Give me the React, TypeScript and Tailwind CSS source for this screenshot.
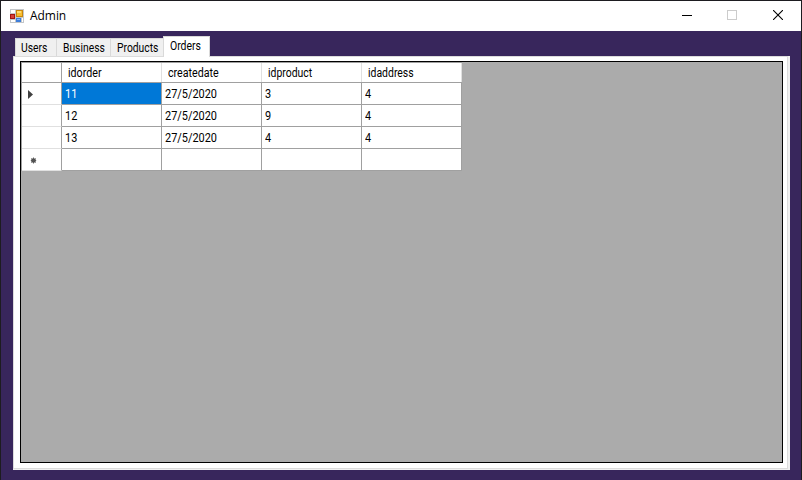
const columns = [
  { name: 'idorder', scale: 'scale-x-[0.89]' },
  { name: 'createdate', scale: 'scale-x-[0.89]' },
  { name: 'idproduct', scale: 'scale-x-[0.87]' },
  { name: 'idaddress', scale: 'scale-x-[0.87]' },
];

const rows = [
  ['11', '27/5/2020', '3', '4'],
  ['12', '27/5/2020', '9', '4'],
  ['13', '27/5/2020', '4', '4'],
  ['', '', '', ''],
];

function FormIcon() {
  return (
    <svg width="14" height="14" viewBox="0 0 14 14" shapeRendering="crispEdges">
      <path d="M0 0h14v14H0z" fill="#c3c6c9" />
      <path d="M1 1h4v3H1zM1 11h4v2H1zM12 9h1v4h-1z" fill="#fff" />
      <path d="M6 1h7v7H6z" fill="#c8860c" />
      <path d="M7 2h5v5H7z" fill="#f7bd30" />
      <path d="M7 2h4v2H7z" fill="#ffdc70" />
      <path d="M0 5h5v5H0z" fill="#a41412" />
      <path d="M1 6h3v3H1z" fill="#d6403a" />
      <path d="M6 9h5v4H6z" fill="#3d7edb" />
      <path d="M7 10h3v1H7z" fill="#8ab8f5" />
    </svg>
  );
}

function TitleBar() {
  return (
    <header className="flex h-[30px] shrink-0 items-center bg-white pl-[9px]">
      <FormIcon />
      <span className="ml-[6px] font-['Open_Sans',sans-serif] text-[12px] leading-[16px] tracking-[-0.05px]">Admin</span>
      <div className="ml-auto flex h-full">
        <div className="flex w-[46px] items-center justify-center">
          <div className="-mt-px h-px w-[10px] bg-black" />
        </div>
        <div className="mr-px flex w-[44px] items-center justify-center">
          <div className="-mt-[2px] size-[10px] border border-[#ccc]" />
        </div>
        <div className="flex w-[46px] items-center justify-center">
          <svg width="10" height="10" viewBox="0 0 10 10" stroke="#000" strokeWidth="1.1" className="-mt-[2px]">
            <path d="M0 0L10 10M10 0L0 10" />
          </svg>
        </div>
      </div>
    </header>
  );
}

function Tabs() {
  return (
    <nav className="ml-[15px] flex h-[20px] items-end text-[12px] leading-[14px]">
      <div className="h-[18px] w-[41px] border-t border-l border-[#d9d9d9] bg-[#f0f0f0] pt-[2px] pl-[5px]">
        <span className="inline-block origin-left scale-x-[0.86]">Users</span>
      </div>
      <div className="h-[18px] w-[54px] border-t border-l border-[#d9d9d9] bg-[#f0f0f0] pt-[2px] pl-[6px]">
        <span className="inline-block origin-left scale-x-[0.86]">Business</span>
      </div>
      <div className="h-[18px] w-[53px] border-t border-l border-[#d9d9d9] bg-[#f0f0f0] pt-[2px] pl-[6px]">
        <span className="inline-block origin-left scale-x-[0.86]">Products</span>
      </div>
      <div className="z-10 -mb-px h-[21px] w-[47px] border border-b-0 border-[#d9d9d9] bg-white pt-[2px] pl-[6px]">
        <span className="inline-block origin-left scale-x-[0.87]">Orders</span>
      </div>
    </nav>
  );
}

function RowMarker({ row }: { row: number }) {
  if (row === 0) {
    return (
      <svg width="5" height="9" viewBox="0 0 5 9" className="mt-px ml-[6px]">
        <path d="M0 0L5 4.5L0 9Z" fill="#404040" />
      </svg>
    );
  }
  if (row === 3) {
    return (
      <svg width="7" height="7" viewBox="0 0 7 7" className="mt-[2px] ml-[8px]">
        <circle cx="3.5" cy="3.5" r="2.2" fill="#404040" />
        <path d="M3.5 .5v6M1 1.5l5 4M6 1.5L1 5.5M.8 3.5h5.4" stroke="#555" strokeWidth="0.9" />
      </svg>
    );
  }
  return null;
}

function OrdersGrid() {
  return (
    <div className="flex w-[441px] flex-col border-t border-l border-[#a0a0a0] text-[12px] leading-[14px]">
      <div className="flex h-[20px] border-b border-[#a0a0a0] bg-white">
        <div className="w-[40px] border-r border-[#a0a0a0]" />
        {columns.map((c) => (
          <div key={c.name} className="w-[100px] border-r border-[#e0e0e0] pt-[3px] pl-[6px]">
            <span className={`inline-block origin-left ${c.scale}`}>{c.name}</span>
          </div>
        ))}
      </div>
      {rows.map((row, r) => (
        <div key={r} className="flex h-[22px]">
          <div className="flex w-[40px] items-center border-r border-b border-r-[#a0a0a0] border-b-[#e0e0e0] bg-white">
            <RowMarker row={r} />
          </div>
          {row.map((cell, c) => (
            <div
              key={c}
              className={`w-[100px] border-r border-b border-[#a0a0a0] pt-[4px] pl-[3px] ${
                r === 0 && c === 0 ? 'bg-[#0078d7] text-white' : 'bg-white'
              }`}
            >
              <span className="inline-block origin-left scale-x-[0.91]">{cell}</span>
            </div>
          ))}
        </div>
      ))}
    </div>
  );
}

export default function App() {
  return (
    <div className="flex h-[480px] w-[802px] flex-col overflow-hidden border border-b-0 border-[#1d1c20] bg-[#38265c] font-[Roboto,sans-serif] text-black">
      <TitleBar />
      <main className="flex flex-col pt-[5px]">
        <div className="-ml-px">
          <Tabs />
        </div>
        <div className="ml-[12px] h-[414px] w-[777px] bg-[#f0f0f0] pr-[2px] pb-px">
          <div className="h-full border border-[#dcdcdc] bg-white pt-[4px] pr-[4px] pb-[5px] pl-[6px]">
            <div className="h-[402px] w-[763px] border border-black bg-[#ababab]">
              <OrdersGrid />
            </div>
          </div>
        </div>
      </main>
    </div>
  );
}
